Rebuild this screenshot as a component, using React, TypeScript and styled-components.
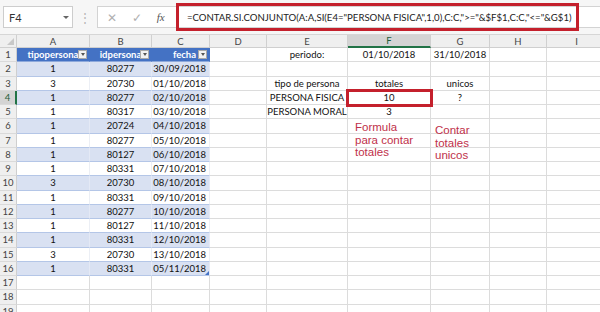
import React from 'react';
import styled, { createGlobalStyle, css } from 'styled-components';

const GlobalStyle = createGlobalStyle`
  html, body { margin: 0; padding: 0; background: #fff; overflow: hidden; }
  body { font-family: Lato, "Liberation Sans", sans-serif; }
  * { box-sizing: border-box; }
`;

const Sheet = styled.div`
  width: 600px;
  height: 312px;
  display: flex;
  flex-direction: column;
  overflow: hidden;
`;

const FormulaBar = styled.div`
  height: 35px;
  flex: none;
  display: flex;
  align-items: center;
  background: #f6f6f6;
  border-bottom: 1px solid #d6d6d6;
  padding-left: 3px;
`;

const NameBox = styled.div`
  width: 70px;
  height: 22px;
  border: 1px solid #cdcdcd;
  background: #fff;
  display: flex;
  align-items: center;
  justify-content: space-between;
  padding: 0 3px 0 5px;
  font-size: 11px;
  color: #333;
`;

const Caret = styled.span`
  width: 0;
  height: 0;
  border-left: 3px solid transparent;
  border-right: 3px solid transparent;
  border-top: 3px solid #666;
`;

const Grip = styled.span`
  width: 24px;
  text-align: center;
  color: #b5b5b5;
  font-size: 12px;
`;

const FormulaField = styled.div`
  flex: 1;
  height: 22px;
  display: flex;
  align-items: center;
  background: #fff;
  border: 1px solid #d3d3d3;
  border-right: none;
`;

const Tools = styled.div`
  width: 78px;
  display: flex;
  align-items: center;
  justify-content: space-around;
  padding: 0 4px 0 2px;
  color: #b0b0b0;
  font-size: 12px;
`;

const Fx = styled.span`
  font-family: "Liberation Serif", serif;
  font-style: italic;
  font-size: 11px;
  color: #555;
`;

const FormulaText = styled.div`
  width: 403px;
  height: 28px;
  flex: none;
  border: 3px solid #c4202c;
  display: flex;
  align-items: center;
  padding-left: 8px;
  font-size: 9.6px;
  color: #222;
  white-space: nowrap;
  overflow: hidden;
`;

const GridWrap = styled.div`
  position: relative;
  flex: 1;
`;

const Grid = styled.div`
  display: grid;
  grid-template-columns: 17px 73px 62px 58px 57px 81px 83px 59px 57px 60px;
  grid-template-rows: 13px;
  grid-auto-rows: 14.25px;
  font-size: 9.5px;
  color: #111;
`;

const ColHead = styled.div<{ $active?: boolean }>`
  background: ${p => (p.$active ? '#d4d4d4' : '#efefef')};
  border-right: 1px solid #d0d0d0;
  border-bottom: ${p => (p.$active ? '2px solid #217346' : '1px solid #cfcfcf')};
  display: flex;
  align-items: center;
  justify-content: center;
  color: ${p => (p.$active ? '#1e5c3a' : '#444')};
  font-size: 9.5px;
`;

const Corner = styled.div`
  background: #efefef;
  border-right: 1px solid #cfcfcf;
  border-bottom: 1px solid #cfcfcf;
  position: relative;
  &::after {
    content: '';
    position: absolute;
    right: 2px;
    bottom: 2px;
    border-left: 7px solid transparent;
    border-bottom: 7px solid #c8c8c8;
  }
`;

const RowHead = styled.div<{ $active?: boolean }>`
  background: ${p => (p.$active ? '#d4d4d4' : '#efefef')};
  border-right: ${p => (p.$active ? '2px solid #217346' : '1px solid #cfcfcf')};
  border-bottom: 1px solid #dadada;
  display: flex;
  align-items: center;
  justify-content: center;
  color: ${p => (p.$active ? '#1e5c3a' : '#444')};
  font-size: 9.5px;
`;

type Kind = 'plain' | 'head' | 'band' | 'row';

const Cell = styled.div<{ $kind: Kind; $align: 'left' | 'center' | 'right'; $marked?: boolean; $handle?: boolean }>`
  position: relative;
  display: flex;
  align-items: center;
  justify-content: ${p => (p.$align === 'left' ? 'flex-start' : p.$align === 'right' ? 'flex-end' : 'center')};
  padding: 0 3px;
  white-space: nowrap;
  overflow: hidden;
  border-right: 1px solid #dcdcdc;
  border-bottom: 1px solid #dcdcdc;
  ${p =>
    p.$kind === 'head' &&
    css`
      background: #4472c4;
      color: #fff;
      font-weight: 700;
      border-right-color: #4472c4;
      border-bottom-color: #8ea9db;
    `}
  ${p =>
    p.$kind === 'band' &&
    css`
      background: #d9e1f2;
      border-right-color: #e4e9f5;
      border-bottom-color: #b4c6e7;
    `}
  ${p =>
    p.$kind === 'row' &&
    css`
      background: #fff;
      border-right-color: #eceff5;
      border-bottom-color: #b4c6e7;
    `}
  ${p =>
    p.$marked &&
    css`
      overflow: visible;
      outline: 3px solid #c4202c;
      outline-offset: -1px;
      z-index: 2;
    `}
  ${p =>
    p.$handle &&
    css`
      &::after {
        content: '';
        position: absolute;
        right: 0;
        bottom: 0;
        border-left: 4px solid transparent;
        border-bottom: 4px solid #4472c4;
      }
    `}
`;

const FilterButton = styled.span`
  position: absolute;
  right: 2px;
  top: 2px;
  width: 9px;
  height: 9px;
  background: #f2f2f2;
  border: 1px solid #a9a9a9;
  display: flex;
  align-items: center;
  justify-content: center;
  &::after {
    content: '';
    border-left: 2.5px solid transparent;
    border-right: 2.5px solid transparent;
    border-top: 3px solid #555;
  }
`;

const Note = styled.div<{ $left: number; $top: number }>`
  position: absolute;
  left: ${p => p.$left}px;
  top: ${p => p.$top}px;
  font-family: "Liberation Sans", Arial, sans-serif;
  font-size: 11.5px;
  line-height: 12.5px;
  color: #c0304a;
`;

const letters = ['A', 'B', 'C', 'D', 'E', 'F', 'G', 'H', 'I'];

const tipo = [1, 3, 1, 1, 1, 1, 1, 1, 3, 1, 1, 1, 1, 3, 1];
const ids = [80277, 20730, 80277, 80317, 20724, 80277, 80127, 80331, 20730, 80331, 80277, 80127, 80331, 20730, 80331];
const fechas = [
  '30/09/2018', '01/10/2018', '02/10/2018', '03/10/2018', '04/10/2018',
  '05/10/2018', '06/10/2018', '07/10/2018', '08/10/2018', '09/10/2018',
  '10/10/2018', '11/10/2018', '12/10/2018', '13/10/2018', '05/11/2018',
];

// valores fuera de la tabla, por fila -> [E, F, G]
const extra: Record<number, string[]> = {
  1: ['periodo:', '01/10/2018', '31/10/2018'],
  3: ['tipo de persona', 'totales', 'unicos'],
  4: ['PERSONA FISICA', '10', '?'],
  5: ['PERSONA MORAL', '3', ''],
};

const formula = '=CONTAR.SI.CONJUNTO(A:A,SI(E4="PERSONA FISICA",1,0),C:C,">="&$F$1,C:C,"<="&G$1)';

export default function App() {
  const rows = [];
  for (let r = 1; r <= 19; r++) {
    const cells = [];
    cells.push(
      <RowHead key="h" $active={r === 4}>
        {r}
      </RowHead>,
    );
    if (r === 1) {
      ['tipopersona', 'idpersona', 'fecha'].forEach((t, i) => {
        cells.push(
          <Cell key={'t' + i} $kind="head" $align={i === 2 ? 'right' : 'center'} style={i === 2 ? { paddingRight: 13 } : undefined}>
            {t}
            <FilterButton />
          </Cell>,
        );
      });
    } else if (r <= 16) {
      const kind: Kind = r % 2 === 0 ? 'band' : 'row';
      const i = r - 2;
      cells.push(
        <Cell key="a" $kind={kind} $align="center">{tipo[i]}</Cell>,
        <Cell key="b" $kind={kind} $align="center">{ids[i]}</Cell>,
        <Cell key="c" $kind={kind} $align="right" $handle={r === 16}>{fechas[i]}</Cell>,
      );
    } else {
      cells.push(
        <Cell key="a" $kind="plain" $align="left" />,
        <Cell key="b" $kind="plain" $align="left" />,
        <Cell key="c" $kind="plain" $align="left" />,
      );
    }
    const ex = extra[r] || ['', '', ''];
    cells.push(
      <Cell key="d" $kind="plain" $align="left" />,
      <Cell key="e" $kind="plain" $align="center">{ex[0]}</Cell>,
      <Cell key="f" $kind="plain" $align="center" $marked={r === 4}>{ex[1]}</Cell>,
      <Cell key="g" $kind="plain" $align="center">{ex[2]}</Cell>,
      <Cell key="h2" $kind="plain" $align="left" />,
      <Cell key="i" $kind="plain" $align="left" />,
    );
    rows.push(<React.Fragment key={r}>{cells}</React.Fragment>);
  }

  return (
    <Sheet>
      <GlobalStyle />
      <FormulaBar>
        <NameBox>
          F4
          <Caret />
        </NameBox>
        <Grip>⋮</Grip>
        <FormulaField>
          <Tools>
            <span>✕</span>
            <span>✓</span>
            <Fx>fx</Fx>
          </Tools>
          <FormulaText>{formula}</FormulaText>
        </FormulaField>
      </FormulaBar>
      <GridWrap>
        <Grid>
          <Corner />
          {letters.map(l => (
            <ColHead key={l} $active={l === 'F'}>
              {l}
            </ColHead>
          ))}
          {rows}
        </Grid>
        <Note $left={355} $top={86}>
          Formula
          <br />
          para contar
          <br />
          totales
        </Note>
        <Note $left={435} $top={89}>
          Contar
          <br />
          totales
          <br />
          unicos
        </Note>
      </GridWrap>
    </Sheet>
  );
}
